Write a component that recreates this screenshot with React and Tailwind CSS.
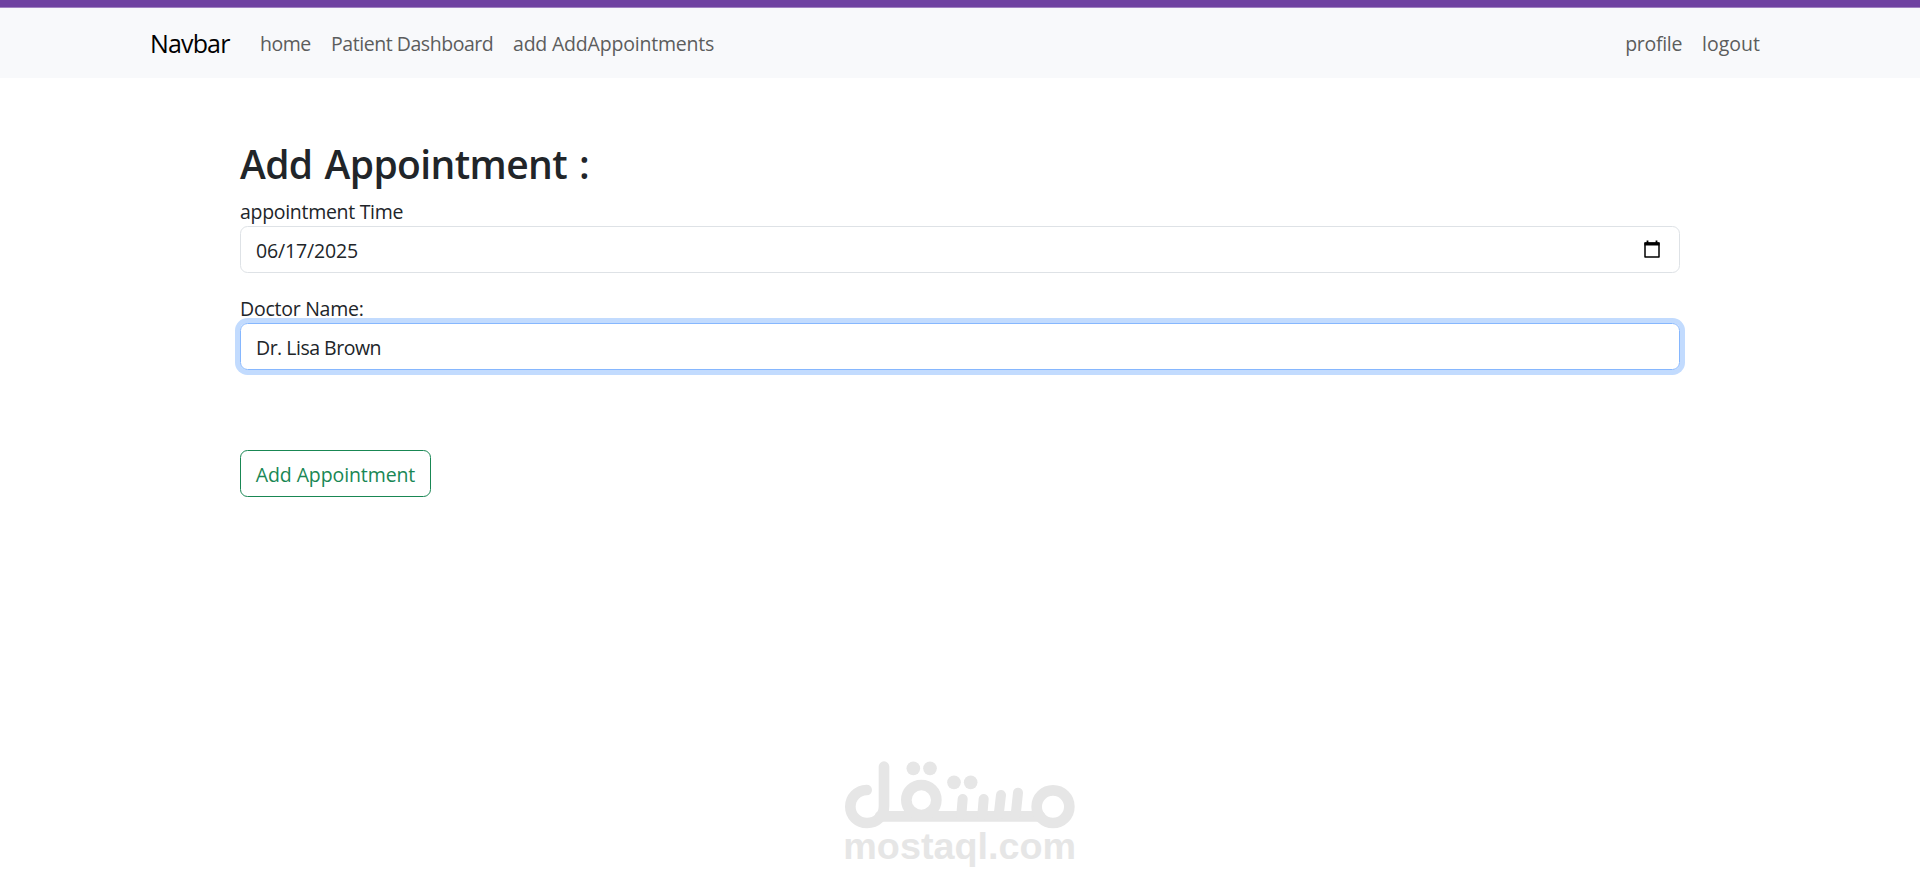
import React from 'react';

const navLinks = [
    { label: 'home', className: 'w-[71px] tracking-[-0.5px]' },
    { label: 'Patient Dashboard', className: 'w-[182px] tracking-[-0.45px]' },
    { label: 'add AddAppointments', className: 'tracking-[-0.2px]' },
];

/** Top navigation bar with the accent strip above it. */
const Navbar = () => (
    <header>
        <div className="h-[7px] bg-[#6f42a1]" />
        <div className="h-px bg-[#a081c1]" />
        <nav className="flex h-[70px] items-center bg-[#f8f9fb] pl-[150px] pr-[160px] text-[19.5px] whitespace-nowrap text-[#5c5d5d]">
            <a href="#" className="w-[110px] pt-0.5 text-[25px] tracking-[-0.85px] text-black">Navbar</a>
            <ul className="flex pt-px">
                {navLinks.map((link) => (
                    <li key={link.label} className={link.className}>
                        <a href="#">{link.label}</a>
                    </li>
                ))}
            </ul>
            <ul className="ml-auto flex gap-5 pt-px">
                <li className="tracking-[-0.3px]"><a href="#">profile</a></li>
                <li><a href="#">logout</a></li>
            </ul>
        </nav>
    </header>
);

const CalendarIcon = () => (
    <svg className="mb-0.5" width="16" height="18" viewBox="0 0 16 18" fill="none">
        <path d="M1 3H15V17H1Z" stroke="#000" strokeWidth="1.5" strokeLinejoin="round" />
        <path d="M0.5 2.5H15.5V5.5H0.5Z" fill="#000" />
        <path d="M3.5 0.5V3M12.5 0.5V3" stroke="#000" strokeWidth="1.8" />
    </svg>
);

/** Mostaql wordmark shown at the bottom of the page. */
const Watermark = () => (
    <svg className="mx-auto mt-auto shrink-0" width="260" height="135" viewBox="0 0 780 405" fill="none">
        <g stroke="#e6e6e6" strokeWidth="32" strokeLinecap="round" strokeLinejoin="round">
            <path d="M110 120C82 121 61 143 61 170C61 198 84 219 111 219C140 219 162 198 162 169V50" />
            <path d="M150 199H630" />
            <circle cx="274" cy="150" r="45" />
            <circle cx="669" cy="170" r="49" />
            <path d="M398 147L394 195M461 147L457 195M513 135L506 195M564 128L557 195" strokeWidth="30" />
        </g>
        <g fill="#e6e6e6">
            <circle cx="250" cy="55" r="20.5" />
            <circle cx="300" cy="55" r="20.5" />
            <circle cx="372" cy="97" r="20.5" />
            <circle cx="422" cy="97" r="20.5" />
            <text
                x="40"
                y="326"
                textLength="698"
                lengthAdjust="spacingAndGlyphs"
                fontFamily="Liberation Sans, sans-serif"
                fontSize="111"
                fontWeight="700"
            >
                mostaql.com
            </text>
        </g>
    </svg>
);

const App = () => {
    return (
        <div className="flex h-[885px] flex-col overflow-hidden bg-white font-['Open_Sans',sans-serif] text-[19.5px] text-[#212529]">
            <Navbar />
            <main className="px-60 pt-[61px]">
                <h2 className="h-[57px] text-[39px] leading-[49px] font-semibold tracking-[-0.6px] [word-spacing:2.5px]">
                    Add Appointment :
                </h2>
                <form>
                    <label className="block h-[30px] leading-[31px] tracking-[-0.3px]">appointment Time</label>
                    <div className="flex h-[47px] items-center justify-between rounded-[7.5px] border border-[#dee2e6] pr-[19px] pl-[15px]">
                        <span className="pt-0.5 tracking-[-0.15px]">06/17/2025</span>
                        <CalendarIcon />
                    </div>
                    <label className="mt-6 block h-[26px] leading-[24px] tracking-[-0.25px]">Doctor Name:</label>
                    <div className="flex h-[47px] items-center rounded-[7.5px] border border-[#86b7fe] pt-0.5 pl-[15px] tracking-[-0.5px] shadow-[0_0_0_5px_#c2dbfe]">
                        Dr. Lisa Brown
                    </div>
                    <button
                        type="button"
                        className="mt-20 h-[47px] w-[191px] rounded-[7.5px] border border-[#198754] pt-0.5 tracking-[-0.1px] whitespace-nowrap text-[#198754]"
                    >
                        Add Appointment
                    </button>
                </form>
            </main>
            <Watermark />
        </div>
    );
};

export default App;
